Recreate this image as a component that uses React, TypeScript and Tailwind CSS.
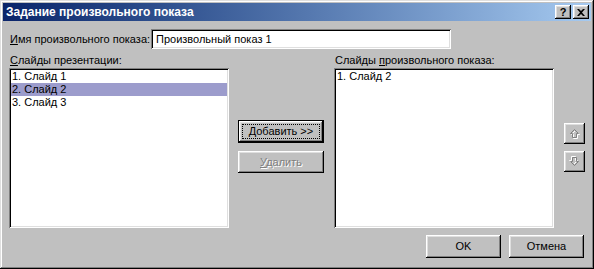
const raised =
  "shadow-[inset_-1px_-1px_#000,inset_1px_1px_#fff,inset_-2px_-2px_#808080,inset_2px_2px_#dfdfdf]";
const sunken =
  "shadow-[inset_1px_1px_#808080,inset_-1px_-1px_#fff,inset_2px_2px_#000,inset_-2px_-2px_#dfdfdf]";

const font = { fontFamily: '"Liberation Sans", Arial, sans-serif' };

const TitleButton = ({ children }: { children: React.ReactNode }) => (
  <div className={`flex h-[14px] w-[16px] items-center justify-center bg-[#c0c0c0] ${raised}`}>
    {children}
  </div>
);

const Arrow = ({ down }: { down?: boolean }) => (
  <svg width="11" height="11" viewBox="0 0 11 11" className={down ? "rotate-180" : ""}>
    <path d="M6.5 2.5 L10.5 6.5 L8.5 6.5 L8.5 10.5 L4.5 10.5 L4.5 6.5 L2.5 6.5 Z" fill="none" stroke="#fff" />
    <path d="M5.5 1.5 L9.5 5.5 L7.5 5.5 L7.5 9.5 L3.5 9.5 L3.5 5.5 L1.5 5.5 Z" fill="none" stroke="#808080" />
  </svg>
);

const ListBox = ({ items, selected }: { items: string[]; selected?: number }) => (
  <div className={`h-[160px] w-[220px] bg-white p-[2px] ${sunken}`}>
    {items.map((item, i) => (
      <div
        key={item}
        className={`h-[13px] pl-[1px] text-[11px] leading-[13px] text-black ${i === selected ? "bg-[#9c9ccc]" : ""}`}
      >
        {item}
      </div>
    ))}
  </div>
);

export default function App() {
  return (
    <div
      className="flex h-[269px] w-[594px] flex-col bg-[#c0c0c0] p-[3px] text-[11px] text-black shadow-[inset_-1px_-1px_#000,inset_1px_1px_#dfdfdf,inset_-2px_-2px_#808080,inset_2px_2px_#fff]"
      style={font}
    >
      {/* заголовок */}
      <div className="flex h-[18px] items-center justify-between bg-gradient-to-r from-[#0a246a] to-[#a6caf0] pl-[3px] pr-[2px]">
        <span className="text-[12px] font-bold text-white">Задание произвольного показа</span>
        <div className="flex gap-[2px]">
          <TitleButton>
            <span className="text-[11px] font-bold leading-none">?</span>
          </TitleButton>
          <TitleButton>
            <svg width="8" height="7" viewBox="0 0 8 7">
              <path d="M0 0h2l2 2 2-2h2L5 3.5 8 7H6L4 5 2 7H0l3-3.5z" fill="#000" />
            </svg>
          </TitleButton>
        </div>
      </div>

      <div className="flex flex-col pl-[6px] pr-[7px]">
        {/* имя показа */}
        <div className="mt-[8px] flex h-[20px] items-center">
          <span className="w-[142px] pl-[1px]">
            <u>И</u>мя произвольного показа:
          </span>
          <div className={`flex h-[20px] w-[300px] items-center bg-white pl-[5px] ${sunken}`}>
            Произвольный показ 1
          </div>
        </div>

        <div className="mt-[4px] flex">
          {/* слайды презентации */}
          <div className="flex flex-col">
            <span className="h-[15px] pl-[1px] leading-[14px]">
              <u>С</u>лайды презентации:
            </span>
            <ListBox items={["1. Слайд 1", "2. Слайд 2", "3. Слайд 3"]} selected={1} />
          </div>

          {/* кнопки */}
          <div className="ml-[9px] mt-[67px] flex flex-col gap-[8px]">
            <div className="h-[23px] w-[86px] border border-black">
              <div className={`flex h-full w-full items-center justify-center bg-[#c0c0c0] p-[3px] ${raised}`}>
                <div className="flex h-full w-full items-center justify-center border border-dotted border-black">
                  <u>Д</u>обавить &gt;&gt;
                </div>
              </div>
            </div>
            <div
              className={`flex h-[22px] w-[86px] items-center justify-center bg-[#c0c0c0] text-[#808080] [text-shadow:1px_1px_#fff] ${raised}`}
            >
              <span>
                <u>У</u>далить
              </span>
            </div>
          </div>

          {/* слайды показа */}
          <div className="ml-[10px] flex flex-col">
            <span className="h-[15px] pl-[1px] leading-[14px]">
              Слайды <u>п</u>роизвольного показа:
            </span>
            <ListBox items={["1. Слайд 2"]} />
          </div>

          {/* вверх / вниз */}
          <div className="ml-[10px] mt-[70px] flex flex-col gap-[7px]">
            <div className={`flex h-[21px] w-[21px] items-center justify-center bg-[#c0c0c0] ${raised}`}>
              <Arrow />
            </div>
            <div className={`flex h-[21px] w-[21px] items-center justify-center bg-[#c0c0c0] ${raised}`}>
              <Arrow down />
            </div>
          </div>
        </div>

        {/* нижние кнопки */}
        <div className="mt-[7px] flex justify-end gap-[8px] pr-[0px]">
          <div className={`flex h-[23px] w-[75px] items-center justify-center bg-[#c0c0c0] ${raised}`}>OK</div>
          <div className={`flex h-[23px] w-[75px] items-center justify-center bg-[#c0c0c0] ${raised}`}>Отмена</div>
        </div>
      </div>
    </div>
  );
}
